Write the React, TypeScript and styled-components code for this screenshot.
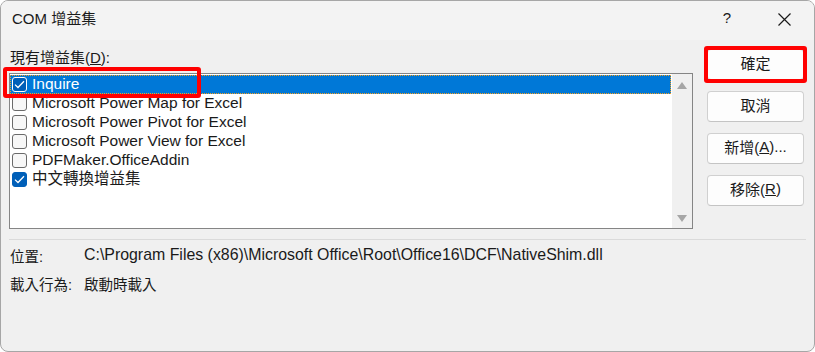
import styled, { createGlobalStyle } from "styled-components";

const GlobalStyle = createGlobalStyle`
   html, body {
      margin: 0;
      padding: 0;
      background: #ffffff;
   }
   * {
      box-sizing: border-box;
   }
`;

const FONT = `"Liberation Sans", "Noto Sans CJK TC", sans-serif`;

const Window = styled.div`
   position: relative;
   width: 815px;
   height: 352px;
   border: 1px solid #a6a6a6;
   border-radius: 8px;
   background: #f0f0f0;
   font-family: ${FONT};
   color: #1a1a1a;
   overflow: hidden;
   display: flex;
   flex-direction: column;
`;

const TitleBar = styled.div`
   height: 39px;
   display: flex;
   align-items: center;
   padding-left: 11px;
   background: #f3f3f3;
`;

const Title = styled.div`
   flex: 1;
   font-size: 15px;
   padding-bottom: 6px;
`;

const Help = styled.div`
   width: 20px;
   text-align: center;
   font-size: 15px;
   margin-right: 41px;
   padding-bottom: 6px;
`;

const Close = styled.div`
   width: 13px;
   height: 13px;
   margin-right: 23px;
   margin-bottom: 3px;
   display: flex;
`;

const Body = styled.div`
   display: grid;
   grid-template-columns: 684px 97px;
   column-gap: 14px;
   padding: 0 0 0 8px;
`;

const LeftCol = styled.div`
   display: flex;
   flex-direction: column;
`;

const ListLabel = styled.div`
   height: 18px;
   margin-top: 9px;
   margin-bottom: 6px;
   padding-left: 1px;
   font-size: 15px;
   line-height: 18px;
`;

const ListBox = styled.div`
   height: 156px;
   border: 1px solid #858585;
   background: #ffffff;
   display: flex;
`;

const Rows = styled.div`
   flex: 1;
   padding-top: 1px;
   display: flex;
   flex-direction: column;
`;

const Row = styled.div<{ $selected?: boolean }>`
   height: 19px;
   display: flex;
   align-items: center;
   gap: 5px;
   padding-left: 2px;
   font-size: 15.5px;
   line-height: 17px;
   white-space: nowrap;
   background: ${(p) => (p.$selected ? "#0078d7" : "transparent")};
   color: ${(p) => (p.$selected ? "#ffffff" : "#1a1a1a")};
   outline: ${(p) => (p.$selected ? "1px dotted #f5a020" : "none")};
   outline-offset: -1px;
   margin-right: 1px;
`;

const Label = styled.span`
   padding-bottom: 2px;
`;

const Box = styled.span<{ $checked?: boolean; $onBlue?: boolean }>`
   width: 15px;
   height: 15px;
   flex: none;
   border-radius: 3px;
   display: flex;
   align-items: center;
   justify-content: center;
   background: ${(p) => (p.$checked ? "#005fb8" : "#f7f7f7")};
   border: 1px solid
      ${(p) => (p.$onBlue ? "#ffffff" : p.$checked ? "#005fb8" : "#6a6a6a")};
`;

const ScrollBar = styled.div`
   width: 20px;
   background: #f0f0f0;
   display: flex;
   flex-direction: column;
   justify-content: space-between;
   align-items: center;
   padding: 8px 0 6px;
`;

const Arrow = styled.span<{ $down?: boolean }>`
   width: 0;
   height: 0;
   border-left: 5px solid transparent;
   border-right: 5px solid transparent;
   ${(p) =>
      p.$down
         ? "border-top: 7px solid #a6a6a6;"
         : "border-bottom: 7px solid #a6a6a6;"}
`;

const RightCol = styled.div`
   display: flex;
   flex-direction: column;
   gap: 11px;
   padding-top: 9px;
`;

const Button = styled.div`
   height: 31px;
   border: 1px solid #d0d0d0;
   border-bottom-color: #c4c4c4;
   border-radius: 4px;
   background: #fdfdfd;
   display: flex;
   align-items: center;
   justify-content: center;
   padding-bottom: 4px;
   font-size: 15px;
   color: #1a1a1a;
`;

const Separator = styled.div`
   height: 1px;
   background: #dadada;
   margin: 10px 8px 0 8px;
`;

const Info = styled.div`
   display: grid;
   grid-template-columns: 74px 1fr;
   grid-auto-rows: 28px;
   align-items: center;
   padding: 1px 0 0 9px;
   color: #1a1a1a;
`;

const InfoText = styled.span<{ $path?: boolean }>`
   font-size: ${(p) => (p.$path ? "15.9px" : "14.5px")};
`;

const Marker = styled.div`
   position: absolute;
   border: 4px solid #ff0000;
   border-radius: 3px;
   pointer-events: none;
`;

const Check = ({ color = "#ffffff" }: { color?: string }) => (
   <svg width="11" height="9" viewBox="0 0 11 9">
      <path d="M1 4.6 L4 7.5 L10 1.3" fill="none" stroke={color} strokeWidth="1.3" />
   </svg>
);

const items = [
   { name: "Inquire", checked: true, selected: true },
   { name: "Microsoft Power Map for Excel", checked: false },
   { name: "Microsoft Power Pivot for Excel", checked: false },
   { name: "Microsoft Power View for Excel", checked: false },
   { name: "PDFMaker.OfficeAddin", checked: false },
   { name: "中文轉換增益集", checked: true },
];

export default function App() {
   return (
      <>
         <GlobalStyle />
         <Window>
            <TitleBar>
               <Title>COM 增益集</Title>
               <Help>?</Help>
               <Close>
                  <svg width="13" height="13" viewBox="0 0 13 13">
                     <path d="M0.5 0.5 L12.5 12.5 M12.5 0.5 L0.5 12.5" stroke="#1a1a1a" strokeWidth="1.2" />
                  </svg>
               </Close>
            </TitleBar>
            <Body>
               <LeftCol>
                  <ListLabel>
                     現有增益集(<u>D</u>):
                  </ListLabel>
                  <ListBox>
                     <Rows>
                        {items.map((it) => (
                           <Row key={it.name} $selected={it.selected}>
                              <Box $checked={it.checked} $onBlue={it.selected}>
                                 {it.checked && <Check />}
                              </Box>
                              <Label>{it.name}</Label>
                           </Row>
                        ))}
                     </Rows>
                     <ScrollBar>
                        <Arrow />
                        <Arrow $down />
                     </ScrollBar>
                  </ListBox>
               </LeftCol>
               <RightCol>
                  <Button>確定</Button>
                  <Button>取消</Button>
                  <Button>
                     新增(<u>A</u>)...
                  </Button>
                  <Button>
                     移除(<u>R</u>)
                  </Button>
               </RightCol>
            </Body>
            <Separator />
            <Info>
               <InfoText>位置:</InfoText>
               <InfoText $path>
                  C:\Program Files (x86)\Microsoft Office\Root\Office16\DCF\NativeShim.dll
               </InfoText>
               <InfoText>載入行為:</InfoText>
               <InfoText>啟動時載入</InfoText>
            </Info>
            <Marker style={{ left: 2, top: 66, width: 198, height: 31 }} />
            <Marker style={{ left: 703, top: 45, width: 103, height: 37 }} />
         </Window>
      </>
   );
}
